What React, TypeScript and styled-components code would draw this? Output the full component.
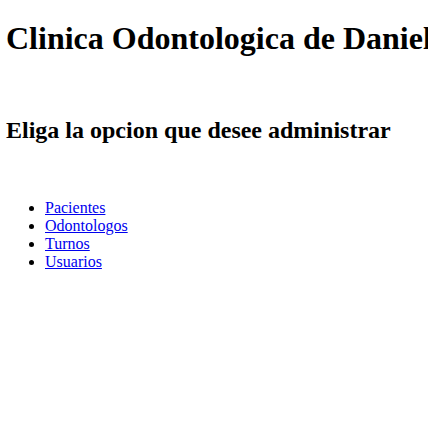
import React from "react";
import styled, { createGlobalStyle } from "styled-components";

const Global = createGlobalStyle`
  html, body {
    margin: 0;
    padding: 0;
    background: #fff;
  }
  body {
    font-family: "Liberation Serif", "Times New Roman", serif;
    font-size: 16px;
    color: #000;
  }
`;

const Page = styled.main`
  display: flow-root;
  padding: 20px 0 0 6px;
`;

const Title = styled.h1`
  font-size: 32px;
  font-weight: bold;
  margin: 0;
  white-space: nowrap;
`;

const Subtitle = styled.h2`
  font-size: 24px;
  font-weight: bold;
  margin: 60px 0 0;
  white-space: nowrap;
`;

const Menu = styled.ul`
  margin: 55px 0 0;
  padding-left: 39px;
  list-style: disc;
`;

const Item = styled.li`
  line-height: normal;
`;

const Link = styled.a`
  color: #0000ee;
  text-decoration: underline;
`;

const options = ["Pacientes", "Odontologos", "Turnos", "Usuarios"];

export default function App() {
  return (
    <>
      <Global />
      <Page>
        <Title>Clinica Odontologica de Daniel</Title>
        <Subtitle>Eliga la opcion que desee administrar</Subtitle>
        <Menu>
          {options.map((o) => (
            <Item key={o}>
              <Link href="#">{o}</Link>
            </Item>
          ))}
        </Menu>
      </Page>
    </>
  );
}
